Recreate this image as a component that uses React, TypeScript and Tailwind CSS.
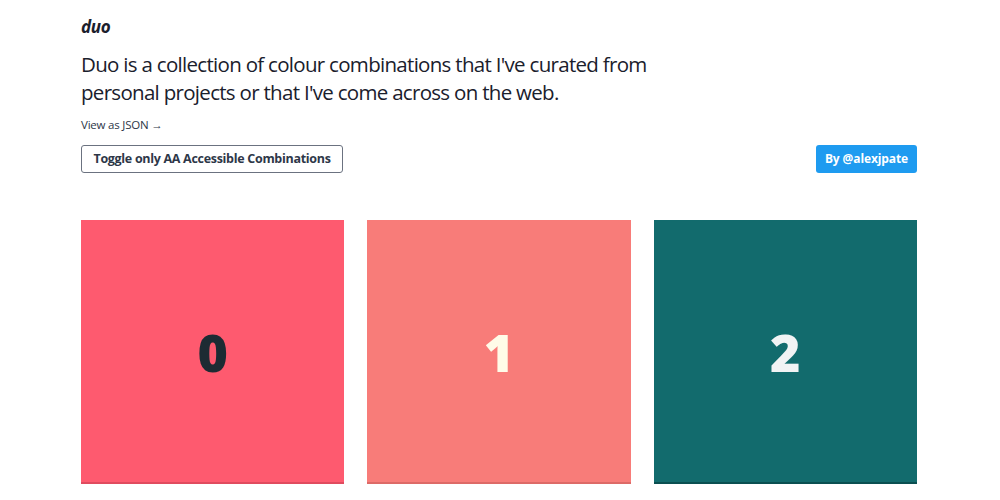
const combos = [
  { id: 0, bg: 'bg-[#fe5a6f]', fg: 'text-[#1d2b33]', edge: 'border-b-[#e04b5f]' },
  { id: 1, bg: 'bg-[#f87c79]', fg: 'text-[#fffbe8]', edge: 'border-b-[#dd6a67]' },
  { id: 2, bg: 'bg-[#126b6d]', fg: 'text-[#f1f3f4]', edge: 'border-b-[#0b4f51]' },
]

export default function App() {
  return (
    <div className="min-h-[500px] bg-white font-['Open_Sans','Noto_Sans',sans-serif] text-[#1a202c]">
      <div className="ml-[81px] w-[836px] pt-[15px]">
        {/* Header */}
        <h1 className="text-[17px] font-bold italic leading-6 tracking-[-0.3px]">duo</h1>
        <p className="mt-[11px] w-[600px] text-[20.5px] leading-[28px] tracking-[-0.7px]">
          Duo is a collection of colour combinations that I've curated from personal projects or that I've come across on the web.
        </p>
        <a className="mt-[11px] block text-[11.5px] leading-4 text-[#2d3748] tracking-[-0.2px]">View as JSON →</a>

        {/* Actions */}
        <div className="mt-[12px] flex items-center justify-between">
          <button className="h-[28px] w-[262px] rounded-[3px] border border-[#6b7280] bg-white text-[12.5px] font-bold text-[#2d3748] tracking-[-0.3px]">
            Toggle only AA Accessible Combinations
          </button>
          <button className="h-[28px] w-[101px] rounded-[3px] bg-[#1e9bf0] text-[12px] font-bold text-white tracking-[-0.1px]">
            By @alexjpate
          </button>
        </div>

        {/* Combinations */}
        <div className="mt-[47px] grid grid-cols-3 gap-[23px]">
          {combos.map((c) => (
            <div
              key={c.id}
              className={`${c.bg} ${c.edge} flex h-[264px] items-center justify-center border-b-2`}
            >
              <span className={`${c.fg} pt-[2px] text-[52px] font-extrabold leading-none`}>{c.id}</span>
            </div>
          ))}
        </div>
      </div>
    </div>
  )
}
